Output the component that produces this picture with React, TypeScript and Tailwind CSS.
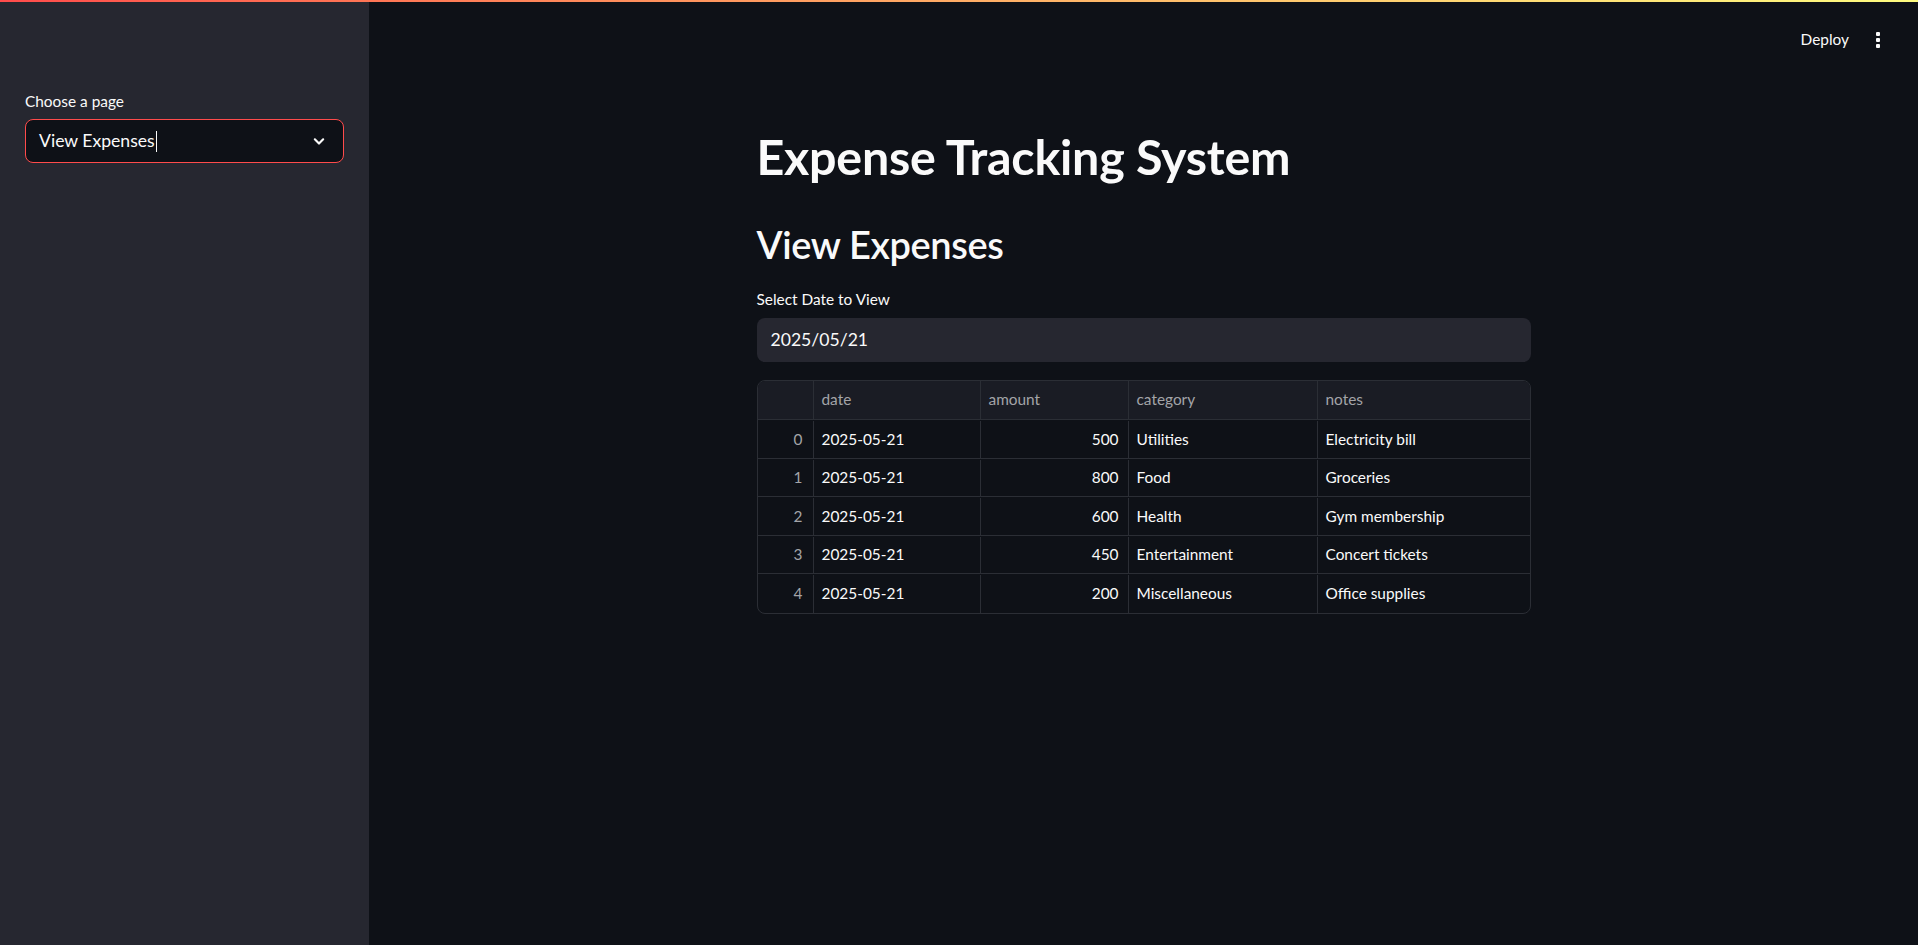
import React from "react";

const rows = [
  { i: 0, date: "2025-05-21", amount: 500, category: "Utilities", notes: "Electricity bill" },
  { i: 1, date: "2025-05-21", amount: 800, category: "Food", notes: "Groceries" },
  { i: 2, date: "2025-05-21", amount: 600, category: "Health", notes: "Gym membership" },
  { i: 3, date: "2025-05-21", amount: 450, category: "Entertainment", notes: "Concert tickets" },
  { i: 4, date: "2025-05-21", amount: 200, category: "Miscellaneous", notes: "Office supplies" },
];

export default function App() {
  return (
    <div
      className="w-[1918px] h-[945px] overflow-hidden bg-[#0e1117] text-[#fafafa] flex flex-col"
      style={{ fontFamily: '"Source Sans Pro", Lato, "Noto Sans", sans-serif' }}
    >
      <div className="h-[2px] w-full bg-gradient-to-r from-[#ff4b4b] to-[#fffd80] shrink-0" />
      <div className="flex flex-1 min-h-0">
        {/* Sidebar */}
        <aside className="w-[369px] shrink-0 bg-[#262730] pt-[88px] px-[25px]">
          <div className="text-[15.4px] leading-[22px] h-[22px] mb-[7px]">Choose a page</div>
          <div className="h-[44px] rounded-[8px] border border-[#ff4b4b] bg-[#0e1117] flex items-center pl-[13px] pr-[14px]">
            <span className="text-[17.6px] leading-none">View Expenses</span>
            <span className="w-[1px] h-[21px] bg-[#fafafa] ml-[1px]" />
            <div className="flex-1" />
            <svg width="20" height="20" viewBox="0 0 24 24" fill="none" stroke="#fafafa" strokeWidth="2.6" strokeLinecap="round" strokeLinejoin="round">
              <path d="M7 10l5 5 5-5" />
            </svg>
          </div>
        </aside>

        {/* Main */}
        <main className="flex-1 flex flex-col">
          <div className="h-[76px] flex items-center justify-end pr-[38px] gap-[27px] shrink-0">
            <span className="text-[15.4px]">Deploy</span>
            <svg width="4" height="16" viewBox="0 0 4 16" fill="#fafafa">
              <rect x="0" y="0" width="4" height="4" rx="1" />
              <rect x="0" y="6" width="4" height="4" rx="1" />
              <rect x="0" y="12" width="4" height="4" rx="1" />
            </svg>
          </div>

          <div className="w-[774px] mx-auto">
            <h1 className="mt-[49px] text-[48.4px] leading-[58px] font-bold tracking-[-0.005em]">
              Expense Tracking System
            </h1>
            <h2 className="mt-[35px] text-[38px] leading-[48px] font-semibold tracking-[-0.01em]">View Expenses</h2>

            <div className="mt-[20px] text-[15.4px] leading-[22px] h-[22px] mb-[8px]">Select Date to View</div>
            <div className="h-[44px] rounded-[8px] bg-[#262730] flex items-center px-[14px] text-[17.6px]">
              2025/05/21
            </div>

            <div className="mt-[18px] rounded-[8px] border border-[#2b2e35] overflow-hidden text-[15.4px]">
              <div className="flex h-[39px] bg-[#1a1c24] border-b border-[#2b2e35] text-[#a3a4a8]">
                <div className="w-[56px] border-r border-[#2b2e35]" />
                <div className="w-[167px] border-r border-[#2b2e35] flex items-center px-[8px]">date</div>
                <div className="w-[148px] border-r border-[#2b2e35] flex items-center px-[8px]">amount</div>
                <div className="w-[189px] border-r border-[#2b2e35] flex items-center px-[8px]">category</div>
                <div className="flex-1 flex items-center px-[8px]">notes</div>
              </div>
              {rows.map((r, idx) => (
                <div
                  key={r.i}
                  className={`flex h-[38.5px] pt-[1px] ${idx < rows.length - 1 ? "border-b border-[#2b2e35]" : ""}`}
                >
                  <div className="w-[56px] border-r border-[#2b2e35] flex items-center justify-end px-[10px] text-[#a3a4a8]">
                    {r.i}
                  </div>
                  <div className="w-[167px] border-r border-[#2b2e35] flex items-center px-[8px]">{r.date}</div>
                  <div className="w-[148px] border-r border-[#2b2e35] flex items-center justify-end px-[9px]">
                    {r.amount}
                  </div>
                  <div className="w-[189px] border-r border-[#2b2e35] flex items-center px-[8px]">{r.category}</div>
                  <div className="flex-1 flex items-center px-[8px]">{r.notes}</div>
                </div>
              ))}
            </div>
          </div>
        </main>
      </div>
    </div>
  );
}
